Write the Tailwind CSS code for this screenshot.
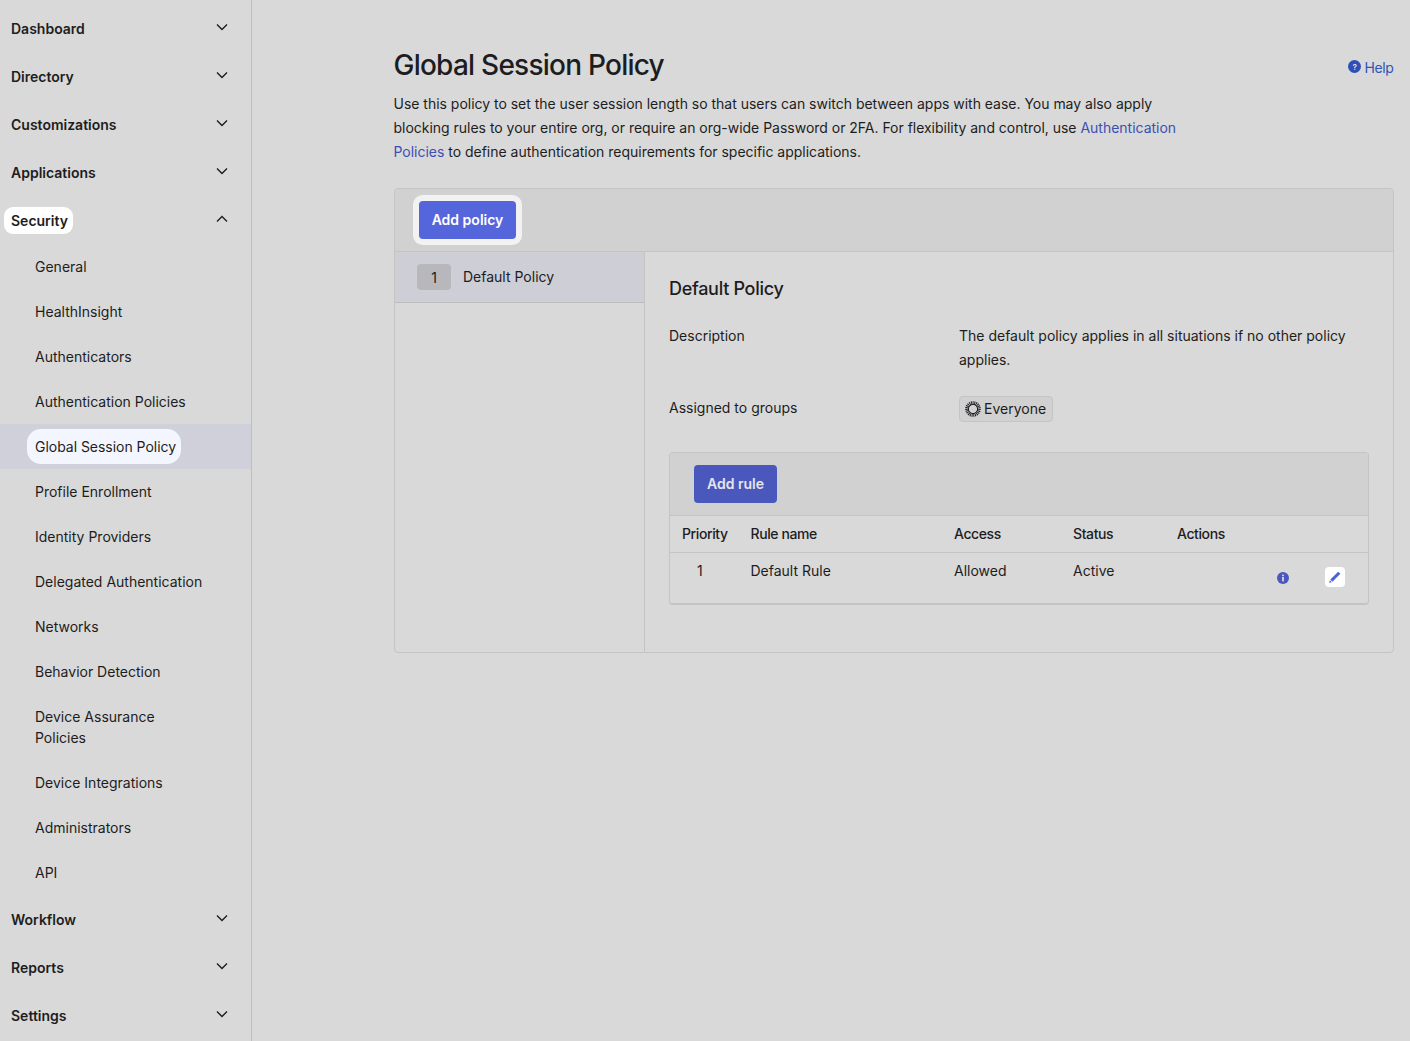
<!DOCTYPE html>
<html lang="en">
<head>
<meta charset="UTF-8">
<title>Global Session Policy</title>
<script src="https://cdn.jsdelivr.net/npm/@tailwindcss/browser@4"></script>
</head>
<body class="bg-[#d9d9d9] text-[#1d1d21] font-['Inter',sans-serif] text-[14px] h-[1041px] overflow-hidden">
<div class="flex h-full">
  <!-- sidebar -->
  <nav class="w-[252px] shrink-0 border-r border-[#bfbfbf] pt-[4px]">
    <div class="h-12 flex items-center justify-between pl-[11px] pr-[23px] font-semibold"><span>Dashboard</span><svg class="w-3 h-3 -mt-[3px]" viewBox="0 0 12 12" fill="none" stroke="#1d1d21" stroke-width="1.4"><path d="M1 3.5 6 8.5 11 3.5"/></svg></div>
    <div class="h-12 flex items-center justify-between pl-[11px] pr-[23px] font-semibold"><span>Directory</span><svg class="w-3 h-3 -mt-[3px]" viewBox="0 0 12 12" fill="none" stroke="#1d1d21" stroke-width="1.4"><path d="M1 3.5 6 8.5 11 3.5"/></svg></div>
    <div class="h-12 flex items-center justify-between pl-[11px] pr-[23px] font-semibold"><span>Customizations</span><svg class="w-3 h-3 -mt-[3px]" viewBox="0 0 12 12" fill="none" stroke="#1d1d21" stroke-width="1.4"><path d="M1 3.5 6 8.5 11 3.5"/></svg></div>
    <div class="h-12 flex items-center justify-between pl-[11px] pr-[23px] font-semibold"><span>Applications</span><svg class="w-3 h-3 -mt-[3px]" viewBox="0 0 12 12" fill="none" stroke="#1d1d21" stroke-width="1.4"><path d="M1 3.5 6 8.5 11 3.5"/></svg></div>
    <div class="h-12 flex items-center justify-between pl-[4px] pr-[23px] font-semibold"><span class="bg-white rounded-[9px] pl-[7px] pr-[5px] py-[3px] leading-[21px]">Security</span><svg class="w-3 h-3 -mt-[3px]" viewBox="0 0 12 12" fill="none" stroke="#1d1d21" stroke-width="1.4"><path d="M1 8.5 6 3.5 11 8.5"/></svg></div>
    <ul class="leading-[21px]">
      <li class="py-3 pl-[35px]">General</li>
      <li class="py-3 pl-[35px]">HealthInsight</li>
      <li class="py-3 pl-[35px]">Authenticators</li>
      <li class="py-3 pl-[35px]">Authentication Policies</li>
      <li class="h-[45px] flex items-center pl-[27px] bg-[#cfd0d9]"><span class="bg-[#f4f6ff] rounded-[14px] pl-2 pr-[5px] py-[7px] tracking-[-0.03px]">Global Session Policy</span></li>
      <li class="py-3 pl-[35px]">Profile Enrollment</li>
      <li class="py-3 pl-[35px]">Identity Providers</li>
      <li class="py-3 pl-[35px]">Delegated Authentication</li>
      <li class="py-3 pl-[35px]">Networks</li>
      <li class="py-3 pl-[35px]">Behavior Detection</li>
      <li class="py-3 pl-[35px]">Device Assurance<br>Policies</li>
      <li class="py-3 pl-[35px]">Device Integrations</li>
      <li class="py-3 pl-[35px]">Administrators</li>
      <li class="py-3 pl-[35px]">API</li>
    </ul>
    <div class="h-12 flex items-center justify-between pl-[11px] pr-[23px] font-semibold"><span>Workflow</span><svg class="w-3 h-3 -mt-[3px]" viewBox="0 0 12 12" fill="none" stroke="#1d1d21" stroke-width="1.4"><path d="M1 3.5 6 8.5 11 3.5"/></svg></div>
    <div class="h-12 flex items-center justify-between pl-[11px] pr-[23px] font-semibold"><span>Reports</span><svg class="w-3 h-3 -mt-[3px]" viewBox="0 0 12 12" fill="none" stroke="#1d1d21" stroke-width="1.4"><path d="M1 3.5 6 8.5 11 3.5"/></svg></div>
    <div class="h-12 flex items-center justify-between pl-[11px] pr-[23px] font-semibold"><span>Settings</span><svg class="w-3 h-3 -mt-[3px]" viewBox="0 0 12 12" fill="none" stroke="#1d1d21" stroke-width="1.4"><path d="M1 3.5 6 8.5 11 3.5"/></svg></div>
  </nav>

  <!-- main -->
  <main class="flex-1 pl-[141.5px] pr-4 pt-[47px]">
    <div class="flex justify-between items-start">
      <h1 class="text-[28px] leading-9 font-medium tracking-[-0.76px]">Global Session Policy</h1>
      <a class="flex items-center gap-[4px] text-[#2f55b8] mt-[11px] mr-[0.5px] leading-5 tracking-[-0.4px]"><svg class="w-[13px] h-[13px] -mt-[3px]" viewBox="0 0 13 13"><circle cx="6.5" cy="6.5" r="6.5" fill="#2f4fb5"/><text x="6.5" y="9.5" font-size="8" font-weight="700" text-anchor="middle" fill="#d9d9d9">?</text></svg>Help</a>
    </div>
    <p class="mt-[9px] leading-6 w-[800px] tracking-[-0.017px]">Use this policy to set the user session length so that users can switch between apps with ease. You may also apply blocking rules to your entire org, or require an org-wide Password or 2FA. For flexibility and control, use <a class="text-[#3d4fb5]">Authentication Policies</a> to define authentication requirements for specific applications.</p>

    <section class="mt-[24px] ml-[0.5px] h-[465px] border border-[#c4c4c4] rounded-[4px] flex flex-col">
      <div class="h-[63px] shrink-0 bg-[#d1d1d1] border-b border-[#c4c4c4] rounded-t-[4px] flex items-center pl-[24px] pb-[1px]">
        <button class="h-[38px] w-[97px] bg-[#5566dd] text-white font-semibold rounded-[4px] ring-[6px] ring-[#f2f2f2]">Add policy</button>
      </div>
      <div class="flex flex-1">
        <div class="w-[250px] shrink-0 border-r border-[#c4c4c4]">
          <div class="h-[51px] bg-[#cdced6] border-b border-[#bdbdbd] flex items-center pl-[22px] gap-[12px]">
            <span class="w-[34px] h-[26px] bg-[#b8b8bc] rounded-[4px] flex items-center justify-center">1</span>
            <span class="-mt-[2px]">Default Policy</span>
          </div>
        </div>
        <div class="flex-1 px-[24px] pt-[25px]">
          <h2 class="text-[18px] leading-6 font-medium tracking-[-0.3px]">Default Policy</h2>
          <div class="flex mt-[23px] leading-6">
            <div class="w-[290px]">Description</div>
            <div class="w-[400px]">The default policy applies in all situations if no other policy applies.</div>
          </div>
          <div class="flex mt-[24px] items-start">
            <div class="w-[290px] leading-6">Assigned to groups</div>
            <span class="h-[26px] pl-[5px] pr-[6px] pb-[1px] flex items-center gap-[3px] bg-[#d1d1d1] border border-[#c4c4c4] rounded-[4px]">
              <svg class="w-4 h-4" viewBox="0 0 16 16" fill="none" stroke="#1d1d21"><circle cx="8" cy="8" r="6" stroke-width="3.6" stroke-dasharray="0.9 0.7"/><circle cx="8" cy="8" r="4.6" stroke-width="1"/></svg>
              Everyone
            </span>
          </div>
          <div class="mt-[30px] border border-[#c4c4c4] border-b-2 rounded-[4px]">
            <div class="h-[63px] bg-[#d1d1d1] border-b border-[#c4c4c4] flex items-center pl-[24px]">
              <button class="h-[38px] w-[83px] pb-[2px] bg-[#4a58bd] text-[#e6e6ea] font-semibold rounded-[4px]">Add rule</button>
            </div>
            <div class="grid grid-cols-[80.5px_203.5px_119px_104px_1fr] h-[37px] pb-[1px] items-center font-medium border-b border-[#c4c4c4] tracking-[-0.4px]">
              <span class="pl-[12px]">Priority</span><span>Rule name</span><span>Access</span><span>Status</span><span>Actions</span>
            </div>
            <div class="grid grid-cols-[80.5px_203.5px_119px_104px_1fr] h-[50px] pt-[7px]">
              <span class="pl-[27px] leading-[21px]">1</span><span class="leading-[21px]">Default Rule</span><span class="leading-[21px]">Allowed</span><span class="leading-[21px]">Active</span>
              <span class="flex items-start justify-end gap-[36px] pr-[23px] pt-[7px]">
                <svg class="w-3 h-3 mt-[5px]" viewBox="0 0 12 12"><circle cx="6" cy="6" r="6" fill="#4a58bd"/><rect x="5.1" y="5" width="1.8" height="4.4" fill="#d9d9d9"/><rect x="5.1" y="2.6" width="1.8" height="1.6" fill="#d9d9d9"/></svg>
                <span class="w-5 h-5 bg-white rounded-[4px] flex items-center justify-center"><svg class="w-[14px] h-[14px]" viewBox="0 0 12 12"><path d="M8.8 1.4 10.6 3.2 3.8 10 2 8.2Z" fill="#4a62d8"/><path d="M1.6 8.8 3.2 10.4 1 11Z" fill="#4a62d8"/></svg></span>
              </span>
            </div>
          </div>
        </div>
      </div>
    </section>
  </main>
</div>
</body>
</html>
